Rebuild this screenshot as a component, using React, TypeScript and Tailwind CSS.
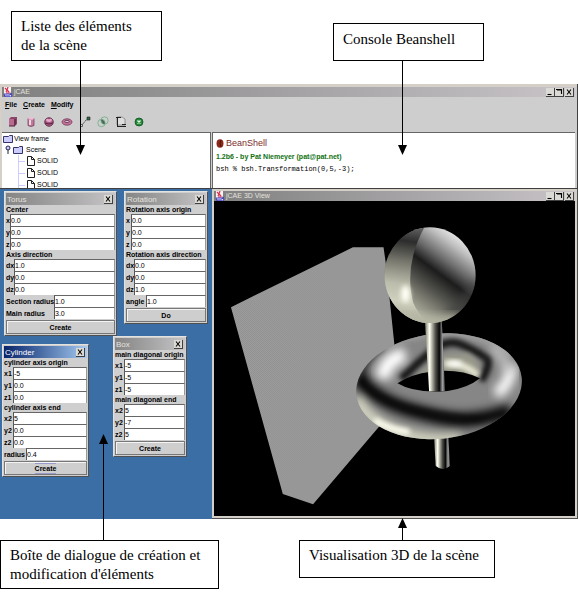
import React from "react";

const uiFont = "font-['Liberation_Sans',sans-serif] text-[7px]";

type ArrowProps = { direction: "up" | "down"; className: string };

function Arrow({ direction, className }: ArrowProps) {
  return (
    <span
      aria-hidden="true"
      className={`absolute z-20 flex w-[9px] flex-col items-center ${direction === "down" ? "" : "rotate-180"} ${className}`}
    >
      <span className="block w-px flex-1 bg-black" />
      <span className="block h-[10px] w-[9px] shrink-0 bg-black [clip-path:polygon(0_0,100%_0,50%_100%)]" />
    </span>
  );
}

function Callout({ className, children }: { className: string; children: React.ReactNode }) {
  return (
    <div
      className={`relative border border-black bg-white px-[9px] font-['Liberation_Serif',serif] text-[15px] leading-[19px] text-black ${className}`}
    >
      {children}
    </div>
  );
}

function JavaIcon() {
  return (
    <svg viewBox="0 0 10 10" className="size-[10px] shrink-0" aria-hidden="true">
      <rect width="7" height="7" x="1" fill="#f4f0f4" />
      <path d="M2 1l2 2-1 2M5 0l-1 3 2 2M3 6h4" stroke="#d8304a" strokeWidth="1.2" fill="none" />
      <path d="M1 7h5l3 1-1 2H2z" fill="#e8e8ff" stroke="#3434b8" strokeWidth=".9" />
      <path d="M7 6l2 1M2 9h5" stroke="#3434b8" />
    </svg>
  );
}

const glyphs = {
  Minimize: "M1.5 6.5h4",
  Maximize: "M1 1.5h6M6.5 1v5M2 2h4",
  Close: "M2 1.5l4 5M6 1.5l-4 5",
};

function TitleButton({ name }: { name: keyof typeof glyphs }) {
  return (
    <button
      type="button"
      aria-label={name}
      className="flex h-[9px] w-[9px] items-center justify-center border-r border-b border-[#404040] bg-[#dcdad4]"
    >
      <svg viewBox="0 0 8 8" className="size-2">
        <path d={glyphs[name]} stroke="#000" strokeWidth="1.1" fill="none" />
      </svg>
    </button>
  );
}

function FrameTitle({ title }: { title: string }) {
  return (
    <div className="flex h-[10px] items-center bg-linear-to-r from-[#808080] to-[#c8c4c8] pr-px pl-px">
      <JavaIcon />
      <span className={`flex-1 pl-px leading-[10px] text-[#e4e2de] ${uiFont}`}>{title}</span>
      <TitleButton name="Minimize" />
      <TitleButton name="Maximize" />
      <span className="w-px" />
      <TitleButton name="Close" />
    </div>
  );
}

type DialogProps = { title: string; active?: boolean; className: string; children: React.ReactNode };

function Dialog({ title, active, className, children }: DialogProps) {
  return (
    <section
      className={`absolute border border-t-[#e4e2de] border-r-[#505050] border-b-[#505050] border-l-[#e4e2de] bg-[#cfcfcf] p-px leading-[9px] font-bold text-black ${uiFont} ${className}`}
    >
      <header
        className={`flex h-[12px] items-center justify-between bg-linear-to-r pr-[2px] pl-px text-[8px] font-normal ${
          active ? "from-[#0a246a] to-[#a6caf0] text-white" : "from-[#858585] to-[#c6c4c6] text-[#e4e2de]"
        }`}
      >
        <h2>{title}</h2>
        <TitleButton name="Close" />
      </header>
      {children}
    </section>
  );
}

function Field({ label, value, labelClass = "" }: { label: string; value: string; labelClass?: string }) {
  return (
    <label className="flex h-[12px] items-center">
      <span className={`shrink-0 whitespace-nowrap ${labelClass}`}>{label}</span>
      <input
        defaultValue={value}
        className="h-[12px] w-full min-w-0 flex-1 border-t border-r border-l border-t-[#666] border-r-[#999] border-l-[#555] bg-white text-[7px] leading-[10px] font-normal text-black outline-none"
      />
    </label>
  );
}

function Group({ title, fields, labelClass }: { title: string; fields: [string, string][]; labelClass: string }) {
  return (
    <fieldset className="min-w-0">
      <legend className="block h-[9px] w-full whitespace-nowrap">{title}</legend>
      {fields.map(([label, value]) => (
        <Field key={label} label={label} value={value} labelClass={labelClass} />
      ))}
    </fieldset>
  );
}

function ActionButton({ children, focused }: { children: string; focused?: boolean }) {
  return (
    <button
      type="button"
      className="mt-px flex h-[14px] w-full items-center justify-center border border-[#777] bg-[#cecece] shadow-[inset_1px_1px_0_#f4f4f4]"
    >
      <span className={focused ? "border-y border-[#9999cc]" : ""}>{children}</span>
    </button>
  );
}

const tools: { name: string; art: React.ReactNode }[] = [
  {
    name: "Box",
    art: (
      <>
        <path d="M2 3l2-2h6v7l-2 2H2z" fill="#8c4468" />
        <path d="M2 3h5v7H2z" fill="#b86a90" />
        <path d="M8 3v6M2 10h6" stroke="#4a2038" />
      </>
    ),
  },
  {
    name: "Cylinder",
    art: (
      <>
        <path d="M3 2.5v7q3 2 6 0v-7z" fill="#c07a9c" stroke="#6a3450" strokeWidth=".7" />
        <path d="M5 4v5" stroke="#fff" strokeWidth="1.4" />
        <ellipse cx="6" cy="2.5" rx="3" ry="1.3" fill="#efbcd4" />
      </>
    ),
  },
  {
    name: "Sphere",
    art: (
      <>
        <circle cx="6" cy="6" r="4.3" fill="#a85882" stroke="#55243f" strokeWidth=".8" />
        <path d="M3 3.500q1.500-1.500 3 0q1.500-1.500 3 0q0 2.500-3 2.500T3 3.500z" fill="#e8a8c8" />
        <path d="M2 7q4 2 8 0" stroke="#55243f" fill="none" />
      </>
    ),
  },
  {
    name: "Torus",
    art: (
      <>
        <ellipse cx="6" cy="6" rx="5" ry="3.200" fill="#c0729a" stroke="#7a3658" strokeWidth=".8" />
        <ellipse cx="6" cy="5.500" rx="2.200" ry="1" fill="#eadfe4" stroke="#55243f" strokeWidth=".8" />
      </>
    ),
  },
  {
    name: "Translate",
    art: (
      <>
        <path d="M2 10l7-8" stroke="#444" strokeDasharray="2 1" />
        <path d="M1.500 8.500h2v2h-2z" fill="#ddd" stroke="#444" strokeWidth=".8" />
        <path d="M8 1h3v3H8z" fill="#2f6c45" stroke="#222" strokeWidth=".6" />
      </>
    ),
  },
  {
    name: "Intersection",
    art: (
      <>
        <circle cx="4.5" cy="7" r="3.7" fill="none" stroke="#7fb593" />
        <circle cx="7.5" cy="4.5" r="3.7" fill="none" stroke="#7fb593" />
        <ellipse cx="6" cy="5.8" rx="1.3" ry="2.7" fill="#486a58" transform="rotate(-35 6 5.8)" />
      </>
    ),
  },
  {
    name: "Section",
    art: (
      <>
        <path d="M2 1h5l3 2v6H2z" fill="#dedede" stroke="#777" strokeWidth=".7" />
        <path d="M1 1.5h5M2.5 1v9M2 10.5h9M7 8.5h4" stroke="#222" />
      </>
    ),
  },
  {
    name: "Delete",
    art: (
      <>
        <circle cx="6" cy="6" r="4" fill="#24883a" stroke="#145222" strokeWidth=".8" />
        <path d="M4.500 4.500l3 3M7.500 4.500l-3 3" stroke="#e8ffe8" strokeWidth="1.300" />
      </>
    ),
  },
];

function FolderIcon() {
  return (
    <svg viewBox="0 0 10 8" className="h-[8px] w-[10px] shrink-0" aria-hidden="true">
      <path d="M.5 7.500V1.500h5l1-1h3v7z" fill="#ccccff" stroke="#333366" />
    </svg>
  );
}

function FileIcon() {
  return (
    <svg viewBox="0 0 8 10" className="h-[10px] w-[8px] shrink-0" aria-hidden="true">
      <path d="M.5.5h4l3 3v6h-7z" fill="#fff" stroke="#222" />
      <path d="M4.500.5v3h3" fill="none" stroke="#222" />
    </svg>
  );
}

function SceneTree() {
  return (
    <ul className={`h-full overflow-hidden bg-white pl-px leading-[12px] font-normal text-black ${uiFont}`}>
      <li>
        <div className="flex h-[11px] items-center gap-px">
          <FolderIcon />
          View frame
        </div>
      </li>
      <li>
        <div className="flex h-[11px] items-center gap-[2px] pl-[2px]">
          <svg viewBox="0 0 6 9" className="h-[9px] w-[6px]" aria-hidden="true">
            <circle cx="3" cy="3" r="2" fill="#ccf" stroke="#224" />
            <path d="M3 5v4" stroke="#224" />
          </svg>
          <FolderIcon />
          <span className="pl-px">Scene</span>
        </div>
        <ul className="ml-[15px] border-l border-[#ccccff]">
          {[1, 2, 3].map((n) => (
            <li key={n} className="flex h-[12px] items-center">
              <span className="mr-[2px] h-px w-[6px] bg-[#ccccff]" />
              <FileIcon />
              <span className="pl-[2px]">SOLID</span>
            </li>
          ))}
        </ul>
      </li>
    </ul>
  );
}

function Scene() {
  return (
    <svg viewBox="-3 6 1086 945" className="block h-[315px] w-full bg-black" role="img" aria-label="Scene">
      <defs>
        <pattern id="dither" width="6" height="6" patternUnits="userSpaceOnUse">
          <path d="M0 0h6v6H0z" fill="#9e9e9e" />
          <path d="M0 0h3v3H0zM3 3h3v3H3z" fill="#909090" />
        </pattern>
        <filter id="soft" x="-50%" y="-50%" width="200%" height="200%" colorInterpolationFilters="sRGB">
          <feGaussianBlur stdDeviation="15" />
        </filter>
        <filter id="fine" x="-50%" y="-50%" width="200%" height="200%" colorInterpolationFilters="sRGB">
          <feGaussianBlur stdDeviation="8" />
        </filter>
        <linearGradient id="ball" gradientUnits="userSpaceOnUse" x1="575" y1="345" x2="745" y2="115">
          <stop offset="0" stopColor="#c4c4b2" />
          <stop offset=".2" stopColor="#88887c" />
          <stop offset=".4" stopColor="#484844" />
          <stop offset=".55" stopColor="#1c1c1c" />
          <stop offset=".7" stopColor="#6c6c6c" />
          <stop offset=".88" stopColor="#c0c0c0" />
          <stop offset="1" stopColor="#ececec" />
        </linearGradient>
        <linearGradient id="lune" gradientUnits="userSpaceOnUse" x1="610" y1="90" x2="570" y2="370">
          <stop offset="0" stopColor="#5c5c5c" />
          <stop offset=".14" stopColor="#2c2c2c" />
          <stop offset=".36" stopColor="#76766c" />
          <stop offset=".6" stopColor="#bcbcac" />
          <stop offset=".78" stopColor="#d0d0be" />
          <stop offset="1" stopColor="#a8a898" />
        </linearGradient>
        <linearGradient id="rod">
          <stop offset="0" stopColor="#5c5c54" />
          <stop offset=".1" stopColor="#b0b0a0" />
          <stop offset=".24" stopColor="#fffff4" />
          <stop offset=".38" stopColor="#a8a89c" />
          <stop offset=".54" stopColor="#4a4a46" />
          <stop offset=".72" stopColor="#080808" />
          <stop offset=".88" stopColor="#a0a0a0" />
          <stop offset="1" stopColor="#444" />
        </linearGradient>
        <clipPath id="ballClip">
          <ellipse cx="647" cy="228" rx="137" ry="144" />
        </clipPath>
        <clipPath id="ringClip">
          <ellipse cx="674" cy="562" rx="250" ry="158" transform="rotate(-6 674 562)" />
        </clipPath>
      </defs>

      <path d="M48 324L415 144H507L515 200L540 440L556 612L492 685L295 917L204 886Z" fill="url(#dither)" />

      <path d="M658 700L664 802Q685 820 707 802L701 700Z" fill="url(#rod)" />

      <g clipPath="url(#ringClip)">
        <path d="M400 380h560v370H400z" fill="#868686" />
        <path d="M500 440Q600 395 720 404T890 470" stroke="#9c9c9c" strokeWidth="26" fill="none" filter="url(#fine)" />
        <path d="M560 540Q600 500 650 458T745 438T822 480Q825 510 800 545" stroke="#141414" strokeWidth="24" fill="none" filter="url(#fine)" />
        <path d="M600 540Q640 490 700 466L760 462Q800 480 795 530L770 550Z" fill="#98988a" filter="url(#fine)" />
        <path d="M690 494Q750 490 790 530" stroke="#f0f0dc" strokeWidth="18" fill="none" filter="url(#fine)" />
        <ellipse cx="722" cy="494" rx="22" ry="8" fill="#fff" filter="url(#fine)" />
        <path d="M572 468Q510 480 505 540" stroke="#fff" strokeWidth="44" fill="none" filter="url(#soft)" />
        <path d="M505 440Q435 490 445 560" stroke="#404040" strokeWidth="20" fill="none" filter="url(#fine)" />
        <path d="M430 530Q470 600 590 634T770 662T890 635" stroke="#000" strokeWidth="42" fill="none" filter="url(#soft)" />
        <path d="M450 560Q510 610 610 633T800 660" stroke="#0c0c0c" strokeWidth="10" fill="none" filter="url(#fine)" />
        <path d="M422 600Q470 680 560 706T740 722" stroke="#d8d8c4" strokeWidth="36" fill="none" filter="url(#soft)" />
        <path d="M480 664Q520 690 585 700" stroke="#fffff2" strokeWidth="18" fill="none" filter="url(#fine)" />
        <path d="M890 500Q890 555 845 585" stroke="#fff" strokeWidth="34" fill="none" filter="url(#soft)" />
        <path d="M830 445Q870 470 885 520" stroke="#c4c4c4" strokeWidth="24" fill="none" filter="url(#soft)" />
      </g>
      <path d="M549 553Q590 525 650 518Q735 508 797 538Q760 568 700 576Q600 584 549 553Z" fill="#000" />

      <path d="M631 360L644 577H692L682 360Z" fill="url(#rod)" />

      <g clipPath="url(#ballClip)">
        <path d="M500 80h300v300H500z" fill="url(#ball)" />
        <path d="M700 350Q760 310 785 250" stroke="#404040" strokeWidth="22" fill="none" filter="url(#soft)" />
        <path d="M632 80Q576 180 590 280L596 310Q610 345 650 380H500V80Z" fill="url(#lune)" />
        <path d="M570 345Q640 385 730 355" stroke="#b8b8a6" strokeWidth="30" fill="none" filter="url(#soft)" />
        <ellipse cx="573" cy="284" rx="14" ry="26" fill="#fffff4" filter="url(#fine)" />
      </g>
    </svg>
  );
}

export default function App() {
  return (
    <main className="w-full bg-white pr-px">
      <div className="flex h-[84px] items-end pr-[94px] pb-[23px] pl-[11px]">
        <Callout className="w-[151px] pt-[5px] pb-[5px]">
          Liste des éléments
          <br />
          de la scène
          <Arrow direction="down" className="top-full left-[64px] h-[95px]" />
        </Callout>
        <Callout className="ml-auto w-[151px] pt-[6px] pb-[11px]">
          Console Beanshell
          <Arrow direction="down" className="top-full left-[64px] h-[95px]" />
        </Callout>
      </div>

      <section className="border-r border-b border-[#404040] bg-[#cecece]">
        <div className="border-t-[3px] border-l-2 border-[#d4d0c8] pr-[2px]">
          <FrameTitle title="jCAE" />
          <nav className={`flex h-[15px] items-center gap-[6px] pl-[3px] leading-[10px] font-bold text-black ${uiFont}`}>
            {["File", "Create", "Modify"].map((item) => (
              <button key={item} type="button">
                <span className="underline">{item[0]}</span>
                {item.slice(1)}
              </button>
            ))}
          </nav>
          <div className="flex h-[20px] items-center gap-[6px] pl-[5px]">
            {tools.map((tool) => (
              <button key={tool.name} type="button" aria-label={tool.name} className="size-3">
                <svg viewBox="0 0 12 12" className="size-3">
                  {tool.art}
                </svg>
              </button>
            ))}
          </div>
          <div className="flex h-[56px]">
            <div className="w-[209px] shrink-0 border-t border-r border-[#666]">
              <SceneTree />
            </div>
            <div className="ml-px min-w-0 flex-1 border-t border-l border-[#666] bg-white pt-[4px] pl-[3px]">
              <div className="flex h-[12px] items-center gap-[2px] font-['Liberation_Sans',sans-serif] text-[9px] leading-[12px] text-[#7c2c2c]">
                <svg viewBox="0 0 8 9" className="h-[9px] w-[8px]" aria-hidden="true">
                  <ellipse cx="4" cy="4.500" rx="3.500" ry="4.200" fill="#8c2818" />
                  <path d="M5 1Q3 4 5 8" stroke="#4a100c" fill="none" />
                </svg>
                BeanShell
              </div>
              <p className={`pt-[3px] leading-[10px] font-bold text-[#107010] ${uiFont}`}>
                1.2b6 - by Pat Niemeyer (pat@pat.net)
              </p>
              <p className="pt-[2px] font-['Liberation_Mono',monospace] text-[7px] leading-[10px] text-black">
                bsh % bsh.Transformation(0,5,-3);
              </p>
            </div>
          </div>
        </div>
      </section>

      <div className="flex h-[330px] bg-[#3a6ea5]">
        <div className="relative w-[212px] shrink-0">
          <Dialog title="Torus" className="top-[2px] left-[4px] w-[113px]">
            <Group title="Center" labelClass="w-[4px]" fields={[["x", "0.0"], ["y", "0.0"], ["z", "0.0"]]} />
            <Group title="Axis direction" labelClass="w-[8px]" fields={[["dx", "1.0"], ["dy", "0.0"], ["dz", "0.0"]]} />
            <Field label="Section radius" value="1.0" labelClass="w-[48px]" />
            <Field label="Main radius" value="3.0" labelClass="w-[48px]" />
            <ActionButton>Create</ActionButton>
          </Dialog>
          <Dialog title="Rotation" className="top-[2px] left-[124px] w-[84px]">
            <Group title="Rotation axis origin" labelClass="w-[5px]" fields={[["x", "0.0"], ["y", "0.0"], ["z", "0.0"]]} />
            <Group title="Rotation axis direction" labelClass="w-[8px]" fields={[["dx", "0.0"], ["dy", "0.0"], ["dz", "1.0"]]} />
            <Field label="angle" value="1.0" labelClass="w-[20px]" />
            <ActionButton>Do</ActionButton>
          </Dialog>
          <Dialog title="Cylinder" active className="top-[155px] left-[2px] w-[87px]">
            <Group title="cylinder axis origin" labelClass="w-[9px]" fields={[["x1", "-5"], ["y1", "0.0"], ["z1", "0.0"]]} />
            <Group title="cylinder axis end" labelClass="w-[9px]" fields={[["x2", "5"], ["y2", "0.0"], ["z2", "0.0"]]} />
            <Field label="radius" value="0.4" labelClass="w-[22px]" />
            <ActionButton focused>Create</ActionButton>
          </Dialog>
          <Dialog title="Box" className="top-[147px] left-[113px] w-[74px]">
            <Group title="main diagonal origin" labelClass="w-[9px]" fields={[["x1", "-5"], ["y1", "-5"], ["z1", "-5"]]} />
            <Group title="main diagonal end" labelClass="w-[9px]" fields={[["x2", "5"], ["y2", "-7"], ["z2", "5"]]} />
            <ActionButton>Create</ActionButton>
          </Dialog>
        </div>
        <section className="min-w-0 flex-1 border-r border-b border-[#505050] bg-[#d4d0c8] p-[2px] pb-px">
          <FrameTitle title="jCAE 3D View" />
          <Scene />
        </section>
      </div>

      <div className="flex items-start pt-[21px] pr-[83px]">
        <Callout className="w-[219px] pt-[5px] pb-[4px]">
          Boîte de dialogue de création et
          <br />
          modification d'éléments
          <Arrow direction="up" className="bottom-full left-[98px] h-[107px]" />
        </Callout>
        <Callout className="ml-auto w-[196px] pt-[5px] pb-[12px]">
          Visualisation 3D de la scène
          <Arrow direction="up" className="bottom-full left-[98px] h-[23px]" />
        </Callout>
      </div>
    </main>
  );
}
